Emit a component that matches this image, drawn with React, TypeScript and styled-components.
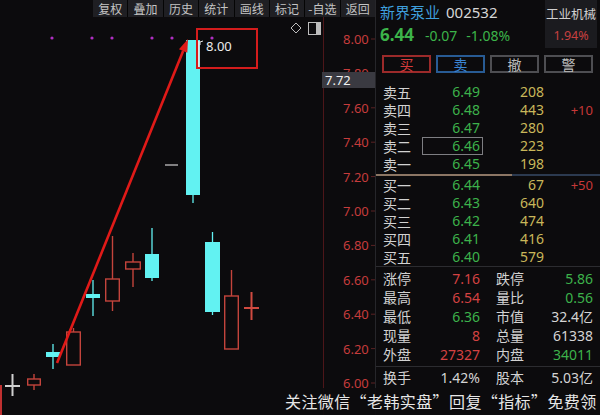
import React from "react";
import styled, { createGlobalStyle } from "styled-components";

const GlobalStyle = createGlobalStyle`
  html, body { margin: 0; padding: 0; background: #0c0b0d; }
  body {
    width: 600px; height: 415px; overflow: hidden;
    font-family: "Noto Sans", "Noto Sans CJK SC", sans-serif;
  }
`;

type Tone = "red" | "green" | "white" | "yellow" | "blue";
const toneColor: Record<Tone, string> = {
  red: "#d44242",
  green: "#3db24b",
  white: "#d4d4d4",
  yellow: "#c9b75a",
  blue: "#3f9fdc",
};

const Screen = styled.div`
  position: relative;
  width: 600px;
  height: 415px;
  display: flex;
  background: #0c0b0d;
  overflow: hidden;
`;

const ChartPane = styled.div`
  width: 375px;
  display: flex;
  flex-direction: column;
`;

const Toolbar = styled.div`
  display: flex;
  gap: 1px;
  height: 17px;
  margin-left: 93px;
  background: #050505;
`;

const Tab = styled.div`
  flex: 1;
  background: #1f1f23;
  color: #c4c4c4;
  font-family: "Noto Sans CJK SC", sans-serif;
  font-size: 12px;
  line-height: 17px;
  text-align: center;
  white-space: nowrap;
`;

const ChartSvg = styled.svg`
  display: block;
  width: 375px;
  height: 398px;
  font-family: "Noto Sans", sans-serif;
`;

const Panel = styled.div`
  width: 224px;
  border-left: 1px solid #26262a;
  display: flex;
  flex-direction: column;
  font-size: 14px;
`;

const Header = styled.div`
  display: flex;
  justify-content: space-between;
  height: 50px;
`;

const Quote = styled.div`
  padding: 2px 0 0 4px;
  display: flex;
  flex-direction: column;
`;

const NameLine = styled.div`
  display: flex;
  gap: 6px;
  height: 20px;
  line-height: 20px;
  font-size: 15px;
`;

const StockName = styled.span`
  color: #3f9fdc;
  font-family: "Noto Sans CJK SC", sans-serif;
`;

const StockCode = styled.span`
  color: #d6d6d6;
`;

const PriceLine = styled.div`
  display: flex;
  align-items: baseline;
  margin-top: 2px;
  height: 22px;
  line-height: 22px;
  color: #3cb44a;
`;

const LastPrice = styled.span`
  width: 45px;
  font-size: 17px;
  font-weight: 700;
`;

const Change = styled.span`
  font-size: 14px;
  margin-right: 9px;
`;

const IndustryBox = styled.div`
  width: 52px;
  height: 48px;
  margin-right: 3px;
  background: #1b1b1f;
  display: flex;
  flex-direction: column;
  align-items: center;
  padding-top: 5px;
  box-sizing: border-box;
  font-size: 12.5px;
`;

const IndustryName = styled.div`
  color: #d0d0d0;
  font-family: "Noto Sans CJK SC", sans-serif;
  line-height: 18px;
`;

const IndustryPct = styled.div`
  color: #c84040;
  line-height: 18px;
  margin-top: 4px;
`;

const ButtonRow = styled.div`
  display: flex;
  gap: 5px;
  margin-top: 5px;
  padding-left: 6px;
  height: 18px;
`;

type BtnKind = "buy" | "sell" | "plain";
const btnColors: Record<BtnKind, [string, string]> = {
  buy: ["#9c2a2a", "#d63c3c"],
  sell: ["#285b94", "#3b86d4"],
  plain: ["#4e4e52", "#bcbcbc"],
};

const TradeButton = styled.div<{ $kind: BtnKind }>`
  width: 49px;
  box-sizing: border-box;
  border: 2px solid ${(p) => btnColors[p.$kind][0]};
  color: ${(p) => btnColors[p.$kind][1]};
  font-family: "Noto Sans CJK SC", sans-serif;
  font-size: 14px;
  line-height: 14px;
  text-align: center;
`;

const BookSection = styled.div<{ $top: number }>`
  margin-top: ${(p) => p.$top}px;
  display: flex;
  flex-direction: column;
`;

const BookRow = styled.div`
  display: grid;
  grid-template-columns: 40px 57px 64px 49px;
  padding-left: 7px;
  height: 18px;
  line-height: 18px;
`;

const Label = styled.span`
  color: #d2d2d2;
  font-family: "Noto Sans CJK SC", sans-serif;
`;

const Num = styled.span<{ $tone: Tone }>`
  position: relative;
  color: ${(p) => toneColor[p.$tone]};
  text-align: right;
  white-space: nowrap;
`;

const Focus = styled.span`
  position: absolute;
  left: -1px;
  right: -3px;
  top: 0;
  bottom: 0;
  border: 1px solid #7e7e82;
`;

const Delta = styled.span`
  color: #c83838;
  text-align: right;
  font-size: 13px;
`;

const RatioBar = styled.div`
  display: flex;
  height: 2px;
  margin-top: 1px;
`;

const RatioPart = styled.div<{ $color: string; $grow: number }>`
  flex: ${(p) => p.$grow};
  background: ${(p) => p.$color};
`;

const Divider = styled.div<{ $top: number }>`
  height: 1px;
  margin-top: ${(p) => p.$top}px;
  background: #2c2c30;
`;

const StatRow = styled.div`
  display: grid;
  grid-template-columns: 40px 57px 56px 57px;
  padding-left: 7px;
  height: 19px;
  line-height: 19px;
`;

const StatLabel = styled(Label)<{ $second?: boolean }>`
  padding-left: ${(p) => (p.$second ? 16 : 0)}px;
`;

const Watermark = styled.div`
  position: absolute;
  left: 275px;
  top: 388px;
  right: 0;
  bottom: 0;
  background: rgba(12, 11, 13, 0.9);
  padding-left: 10px;
  color: #e6e6e6;
  font-family: "Noto Sans CJK SC", sans-serif;
  font-size: 16px;
  line-height: 26px;
  letter-spacing: 0.4px;
  white-space: nowrap;
`;

const tabs = ["复权", "叠加", "历史", "统计", "画线", "标记", "-自选", "返回"];

const sell: [string, string, string, string][] = [
  ["卖五", "6.49", "208", ""],
  ["卖四", "6.48", "443", "+10"],
  ["卖三", "6.47", "280", ""],
  ["卖二", "6.46", "223", ""],
  ["卖一", "6.45", "198", ""],
];
const buy: [string, string, string, string][] = [
  ["买一", "6.44", "67", "+50"],
  ["买二", "6.43", "640", ""],
  ["买三", "6.42", "474", ""],
  ["买四", "6.41", "416", ""],
  ["买五", "6.40", "579", ""],
];

type Stat = [string, string, Tone, string, string, Tone];
const stats: Stat[] = [
  ["涨停", "7.16", "red", "跌停", "5.86", "green"],
  ["最高", "6.54", "red", "量比", "0.56", "green"],
  ["最低", "6.36", "green", "市值", "32.4亿", "white"],
  ["现量", "8", "red", "总量", "61338", "white"],
  ["外盘", "27327", "red", "内盘", "34011", "green"],
];
const lastStat: Stat = ["换手", "1.42%", "white", "股本", "5.03亿", "white"];

type Candle = {
  x1: number;
  x2: number;
  top: number;
  bottom: number;
  hi: number;
  lo: number;
  kind: "up" | "down" | "cross";
  color?: string;
};

const candles: Candle[] = [
  { x1: 5, x2: 20, top: 386, bottom: 386, hi: 374, lo: 396, kind: "cross", color: "#cfcfcf" },
  { x1: 27, x2: 41, top: 379, bottom: 385, hi: 374, lo: 390, kind: "up" },
  { x1: 46, x2: 60, top: 352, bottom: 357, hi: 344, lo: 369, kind: "down" },
  { x1: 66, x2: 81, top: 332, bottom: 365, hi: 328, lo: 365, kind: "up" },
  { x1: 86, x2: 100, top: 294, bottom: 298, hi: 280, lo: 316, kind: "down" },
  { x1: 105, x2: 120, top: 279, bottom: 301, hi: 236, lo: 311, kind: "up" },
  { x1: 125, x2: 141, top: 262, bottom: 269, hi: 253, lo: 287, kind: "up" },
  { x1: 145, x2: 159, top: 254, bottom: 278, hi: 228, lo: 281, kind: "down" },
  { x1: 186, x2: 200, top: 40, bottom: 195, hi: 40, lo: 203, kind: "down" },
  { x1: 205, x2: 220, top: 242, bottom: 312, hi: 232, lo: 315, kind: "down" },
  { x1: 224, x2: 239, top: 296, bottom: 349, hi: 270, lo: 349, kind: "up" },
  { x1: 244, x2: 259, top: 308, bottom: 308, hi: 292, lo: 320, kind: "cross", color: "#d04a40" },
];

const RED = "#c4443c";
const CYAN = "#62f2f2";

const CandleShape: React.FC<{ c: Candle }> = ({ c }) => {
  const cx = (c.x1 + c.x2) / 2;
  if (c.kind === "cross") {
    return (
      <g stroke={c.color} strokeWidth={2}>
        <line x1={c.x1} y1={c.top} x2={c.x2} y2={c.top} />
        <line x1={cx} y1={c.hi} x2={cx} y2={c.lo} />
      </g>
    );
  }
  if (c.kind === "down") {
    return (
      <g>
        <line x1={cx} y1={c.hi} x2={cx} y2={c.lo} stroke={CYAN} strokeWidth={1.3} />
        <rect x={c.x1} y={c.top} width={c.x2 - c.x1} height={c.bottom - c.top} fill={CYAN} />
      </g>
    );
  }
  return (
    <g stroke={RED} strokeWidth={1.4}>
      {c.hi < c.top && <line x1={cx} y1={c.hi} x2={cx} y2={c.top} />}
      {c.lo > c.bottom && <line x1={cx} y1={c.bottom} x2={cx} y2={c.lo} />}
      <rect
        x={c.x1 + 0.7}
        y={c.top}
        width={c.x2 - c.x1 - 1.4}
        height={c.bottom - c.top}
        fill="#0c0b0d"
      />
    </g>
  );
};

const axisPrices = [8.0, 7.8, 7.6, 7.4, 7.2, 7.0, 6.8, 6.6, 6.4, 6.2, 6.0];
const yOf = (p: number) => 39 + (8 - p) * 172;
const dots = [52, 92, 112, 152, 172, 212];

const Chart: React.FC = () => {
  // arrow geometry
  const sx = 57, sy = 363, tx = 188, ty = 39;
  const dx = tx - sx, dy = ty - sy;
  const len = Math.hypot(dx, dy);
  const ux = dx / len, uy = dy / len;
  const px = -uy, py = ux;
  const bx = tx - ux * 13, by = ty - uy * 13;
  const head = `${tx},${ty} ${bx + px * 4.5},${by + py * 4.5} ${bx - px * 4.5},${by - py * 4.5}`;
  return (
    <ChartSvg viewBox="0 17 375 398">
      <line x1={323.5} y1={17} x2={323.5} y2={415} stroke="#4d1619" strokeWidth={1} />
      <line x1={1} y1={385} x2={1} y2={415} stroke="#c03030" strokeWidth={2} />
      {axisPrices.map((p) => (
        <g key={p}>
          <text x={343} y={yOf(p)} dominantBaseline="central" fontSize={13} fill="#c63c3c">
            {p.toFixed(2)}
          </text>
          <line x1={371} y1={yOf(p)} x2={375} y2={yOf(p)} stroke="#5a2224" />
        </g>
      ))}
      <rect x={322} y={72} width={53} height={16} fill="#3a3a41" />
      <text x={325} y={80} dominantBaseline="central" fontSize={13} fill="#f2f2f2">
        7.72
      </text>

      <polygon points="296,23 301,28 296,33 291,28" fill="none" stroke="#bdbdbd" strokeWidth={1} />
      <rect x={308.5} y={22.5} width={12} height={12} fill="none" stroke="#bdbdbd" strokeWidth={1} />
      <rect x={316} y={23} width={4} height={11} fill="#bdbdbd" />

      {dots.map((x) => (
        <circle key={x} cx={x} cy={38} r={1.6} fill="#b02fc2" />
      ))}

      {candles.map((c, i) => (
        <CandleShape key={i} c={c} />
      ))}
      <line x1={165} y1={165} x2={178} y2={165} stroke="#a8a8a8" strokeWidth={1.5} />
      <line x1={198.5} y1={41} x2={198.5} y2={67} stroke="#e4e4e4" strokeWidth={2} />
      <polyline points="200,45 200,42 203,41" fill="none" stroke="#e4e4e4" strokeWidth={1} />
      <text x={206} y={46} dominantBaseline="central" fontSize={13} fill="#ececec">
        8.00
      </text>

      <line x1={sx} y1={sy} x2={bx} y2={by} stroke="#e01a18" strokeWidth={2.6} />
      <polygon points={head} fill="#e01a18" />
      <rect x={197} y={29} width={60} height={39} fill="none" stroke="#d41c1c" strokeWidth={2} />
    </ChartSvg>
  );
};

const OrderRow: React.FC<{ r: [string, string, string, string]; focus?: boolean }> = ({ r, focus }) => (
  <BookRow>
    <Label>{r[0]}</Label>
    <Num $tone="green">
      {focus && <Focus />}
      {r[1]}
    </Num>
    <Num $tone="yellow">{r[2]}</Num>
    <Delta>{r[3]}</Delta>
  </BookRow>
);

const StatLine: React.FC<{ s: Stat }> = ({ s }) => (
  <StatRow>
    <StatLabel>{s[0]}</StatLabel>
    <Num $tone={s[2]}>{s[1]}</Num>
    <StatLabel $second>{s[3]}</StatLabel>
    <Num $tone={s[5]}>{s[4]}</Num>
  </StatRow>
);

export default function App() {
  return (
    <Screen>
      <GlobalStyle />
      <ChartPane>
        <Toolbar>
          {tabs.map((t) => (
            <Tab key={t}>{t}</Tab>
          ))}
        </Toolbar>
        <Chart />
      </ChartPane>
      <Panel>
        <Header>
          <Quote>
            <NameLine>
              <StockName>新界泵业</StockName>
              <StockCode>002532</StockCode>
            </NameLine>
            <PriceLine>
              <LastPrice>6.44</LastPrice>
              <Change>-0.07</Change>
              <Change>-1.08%</Change>
            </PriceLine>
          </Quote>
          <IndustryBox>
            <IndustryName>工业机械</IndustryName>
            <IndustryPct>1.94%</IndustryPct>
          </IndustryBox>
        </Header>
        <ButtonRow>
          <TradeButton $kind="buy">买</TradeButton>
          <TradeButton $kind="sell">卖</TradeButton>
          <TradeButton $kind="plain">撤</TradeButton>
          <TradeButton $kind="plain">警</TradeButton>
        </ButtonRow>
        <BookSection $top={10}>
          {sell.map((r) => (
            <OrderRow key={r[0]} r={r} focus={r[0] === "卖二"} />
          ))}
        </BookSection>
        <RatioBar>
          <RatioPart $color="#8c7664" $grow={136} />
          <RatioPart $color="#2c3a50" $grow={88} />
        </RatioBar>
        <BookSection $top={0}>
          {buy.map((r) => (
            <OrderRow key={r[0]} r={r} />
          ))}
        </BookSection>
        <Divider $top={0} />
        <BookSection $top={2}>
          {stats.map((s) => (
            <StatLine key={s[0]} s={s} />
          ))}
        </BookSection>
        <Divider $top={2} />
        <BookSection $top={1}>
          <StatLine s={lastStat} />
        </BookSection>
      </Panel>
      <Watermark>关注微信“老韩实盘”回复“指标”免费领</Watermark>
    </Screen>
  );
}
